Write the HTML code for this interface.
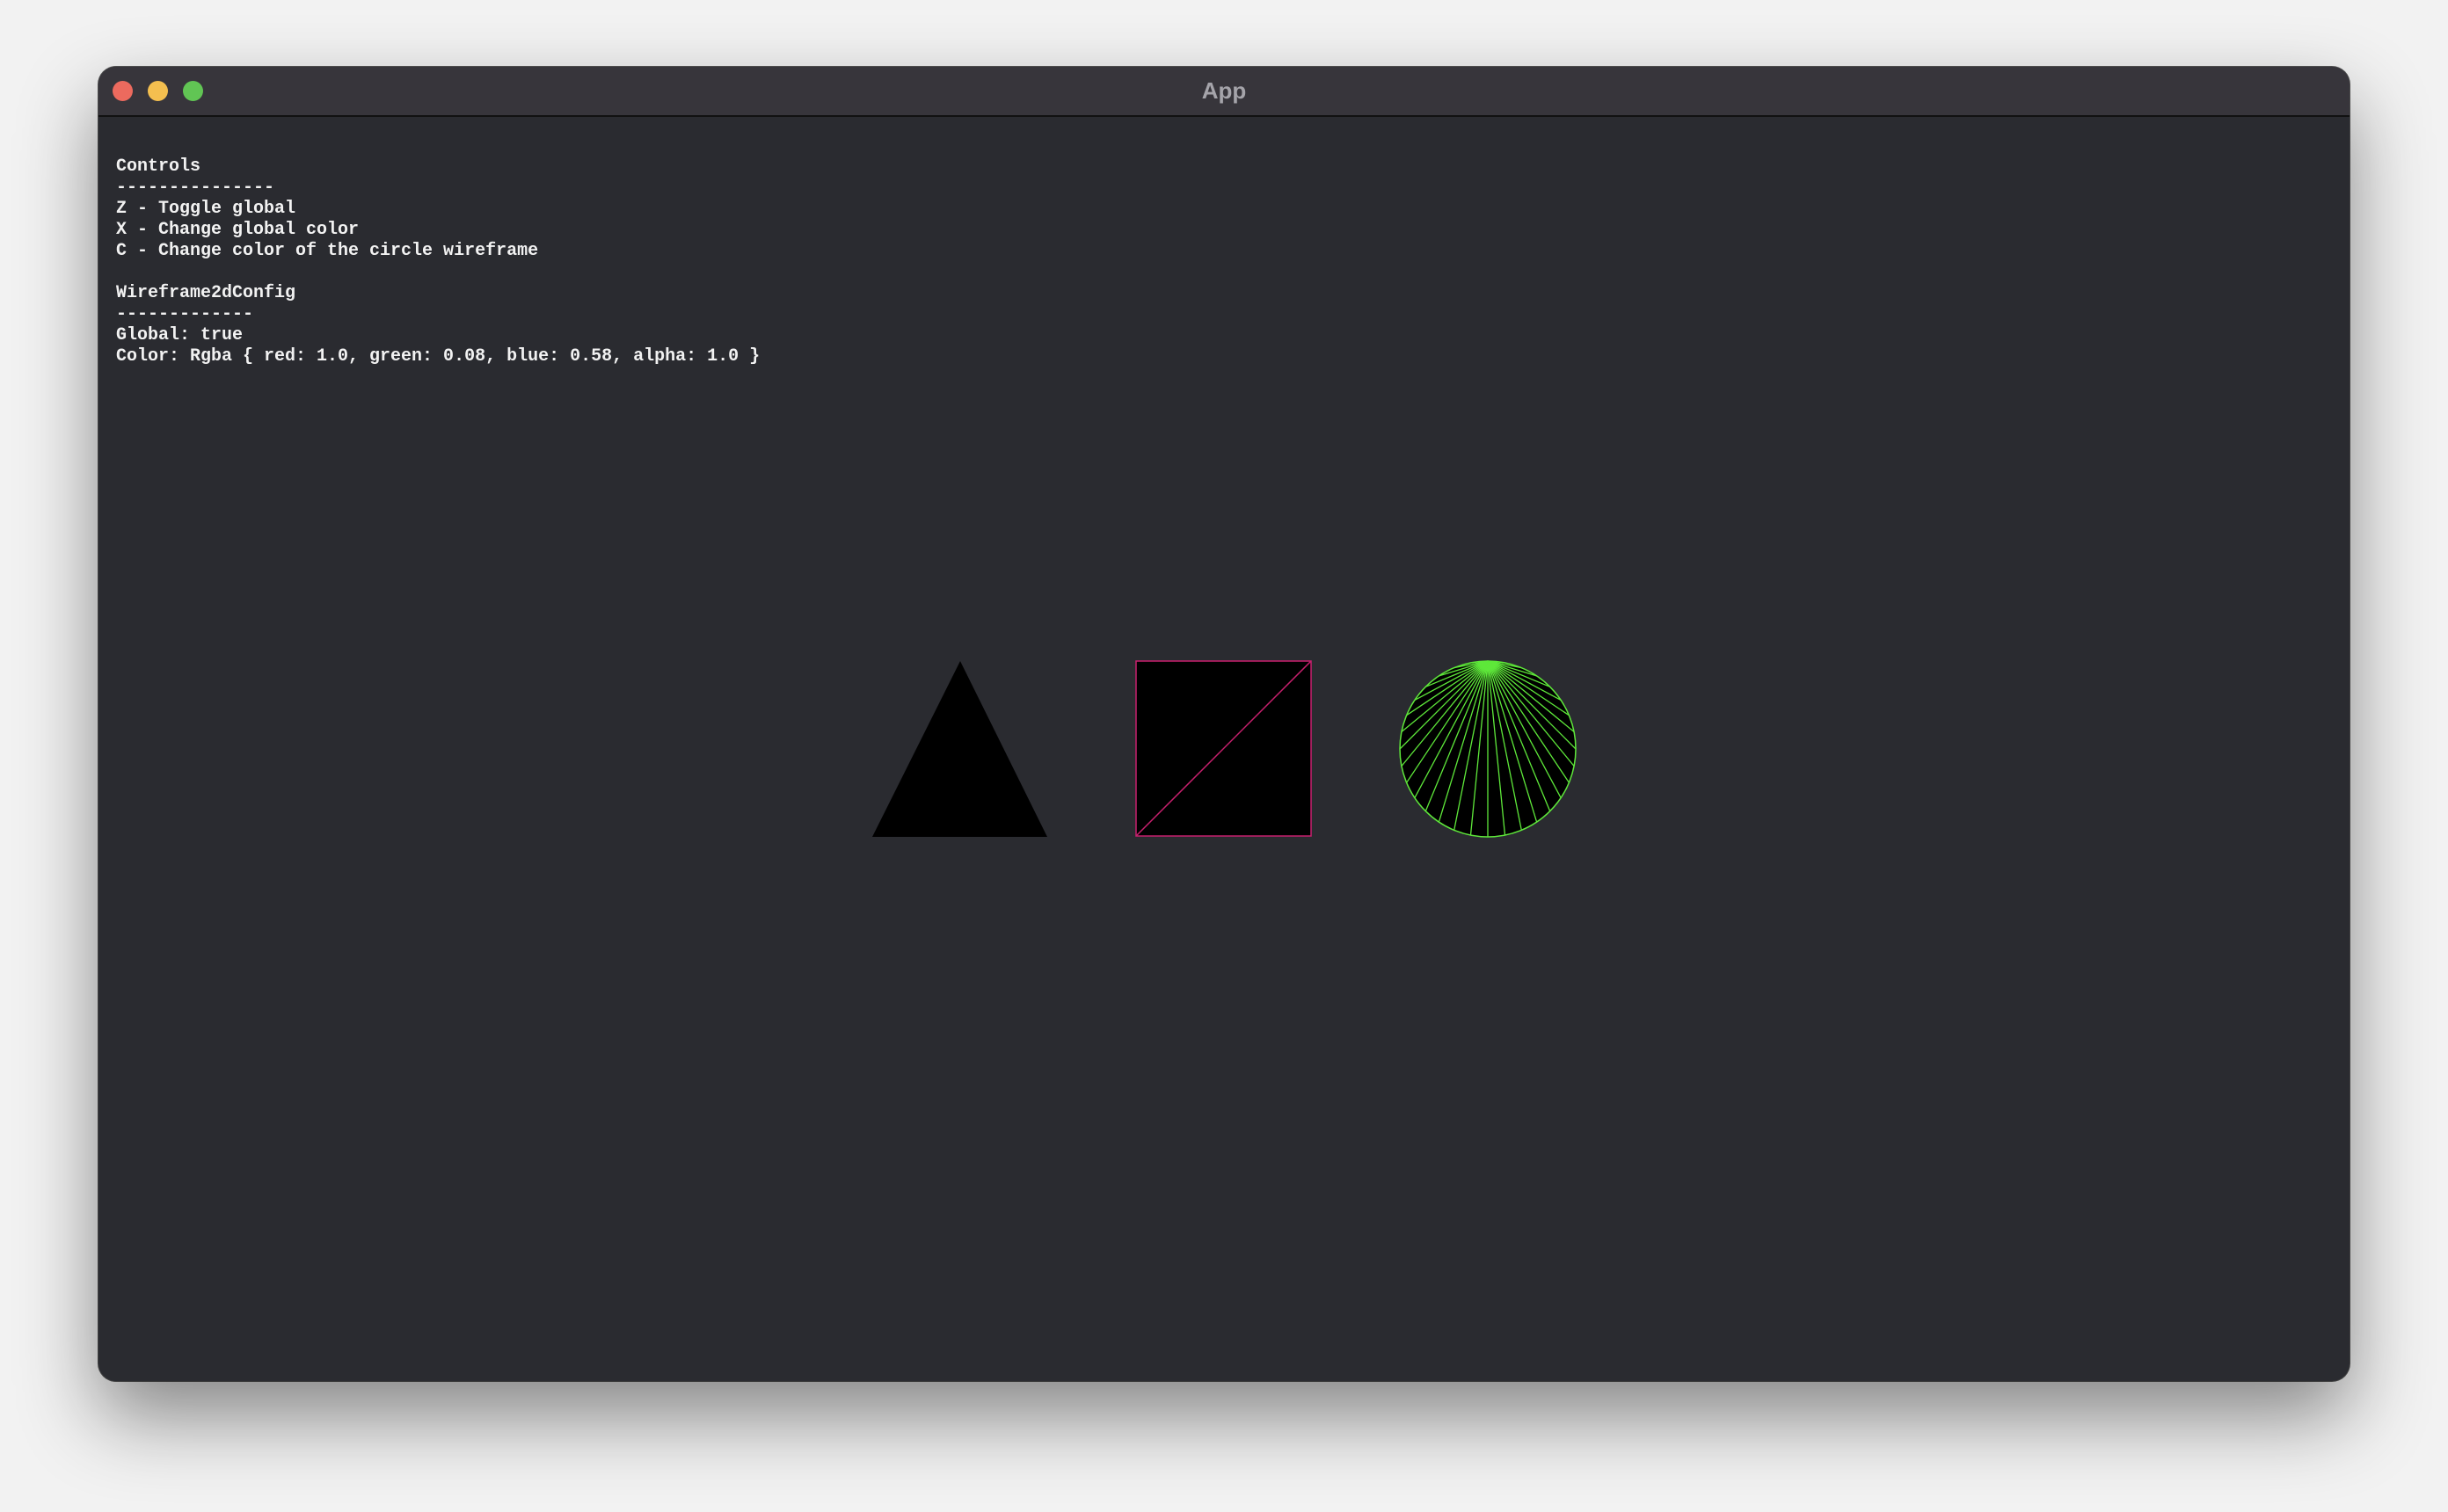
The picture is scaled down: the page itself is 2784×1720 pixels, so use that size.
<!DOCTYPE html>
<html><head><style>
html,body{margin:0;padding:0}
body{width:2784px;height:1720px;background:#f2f2f2;position:relative;overflow:hidden}
.win{position:absolute;left:112px;top:76px;width:2560px;height:1495px;background:#2a2b30;border-radius:20px;overflow:hidden;box-shadow:0 40px 90px rgba(0,0,0,0.45),0 0 0 1px #555}
.tb{position:absolute;left:0;top:0;width:100%;height:55px;background:#37353b;border-bottom:2px solid #111}
.dot{position:absolute;top:16px;width:23px;height:23px;border-radius:50%}
.title{position:absolute;left:0;width:100%;top:12px;text-align:center;font:bold 26px "Liberation Sans",sans-serif;color:#a5a4aa}
pre{position:absolute;left:20px;top:102px;margin:0;font:bold 20px/24px "Liberation Mono",monospace;color:#f2f2f2}
svg{position:absolute;left:0;top:0}
</style></head><body>
<div class="win">
<div class="tb">
<div class="dot" style="left:16px;background:#ec6a5e"></div>
<div class="dot" style="left:56px;background:#f4bf4f"></div>
<div class="dot" style="left:96px;background:#61c554"></div>
<div class="title">App</div>
</div>
<pre>Controls
---------------
Z - Toggle global
X - Change global color
C - Change color of the circle wireframe

Wireframe2dConfig
-------------
Global: true
Color: Rgba { red: 1.0, green: 0.08, blue: 0.58, alpha: 1.0 }</pre>
</div>
<svg width="2784" height="1720" id="s">
<polygon points="1092,752 1191,952 992,952" fill="#000"/>
<rect x="1292" y="752" width="199" height="199" fill="#000" stroke="#c8206e" stroke-width="1.5"/>
<line x1="1292" y1="951" x2="1491" y2="752" stroke="#c8206e" stroke-width="1.5"/>
<circle cx="1692" cy="852" r="100" fill="#000" stroke="#5ee83a" stroke-width="1.5"/>
<g id="fan" stroke="#5ee83a" stroke-width="1.3"></g>
</svg>
<script>
var g=document.getElementById('fan'),s='';
var n=32;
for(var i=1;i<n;i++){var a=-Math.PI/2+i*2*Math.PI/n;var x=1692+100*Math.cos(a),y=852+100*Math.sin(a);
s+='<line x1="1692" y1="752" x2="'+x.toFixed(1)+'" y2="'+y.toFixed(1)+'"/>';}
g.innerHTML=s;
</script>
</body></html>
